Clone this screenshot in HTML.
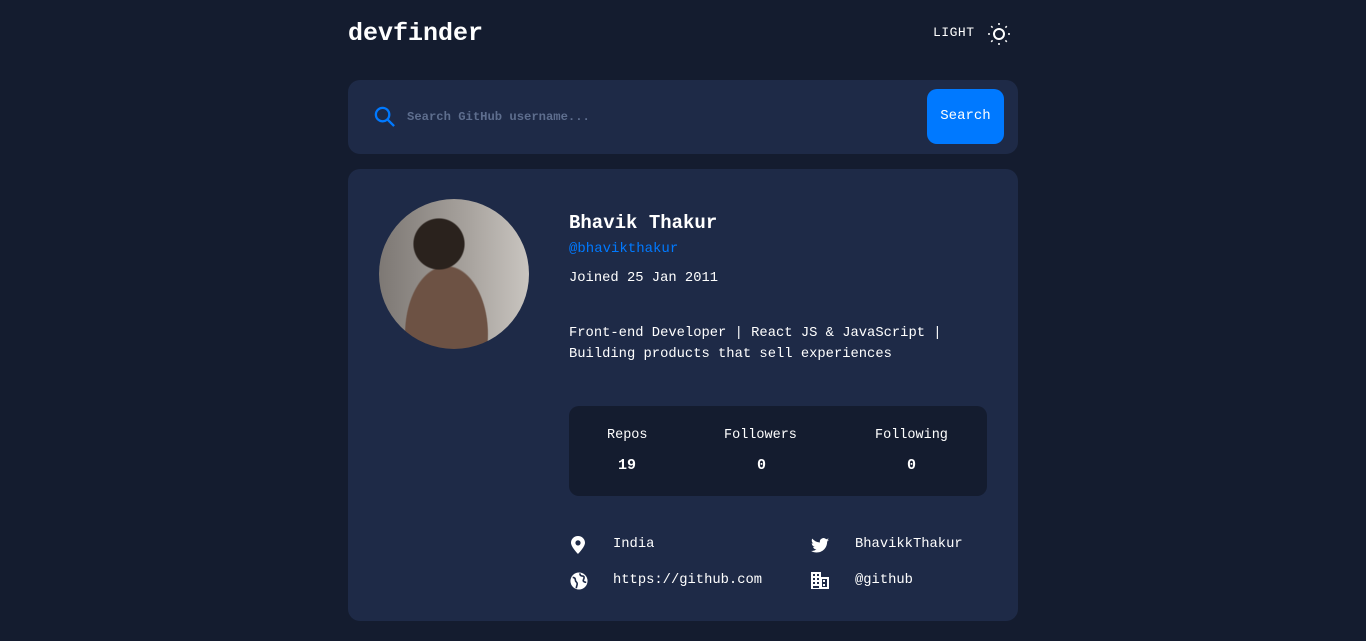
<!DOCTYPE html>
<html><head><style>
*{margin:0;padding:0;box-sizing:border-box}
body{width:1366px;height:641px;background:#141c2f;font-family:"Liberation Mono",monospace;color:#fff;position:relative;overflow:hidden}
.abs{position:absolute;white-space:nowrap}
</style></head><body>
<div class="abs" style="left:348px;top:18px;font-size:25px;font-weight:bold;line-height:32px">devfinder</div>
<div class="abs" style="left:933px;top:25px;font-size:13px;letter-spacing:0.5px;line-height:16px">LIGHT</div>
<svg class="abs" style="left:987px;top:22px" width="24" height="24" viewBox="0 0 24 24" fill="none" stroke="#fff" stroke-width="2"><circle cx="12" cy="12" r="5"/><path d="M12 1v2M12 21v2M1 12h2M21 12h2M4.2 4.2l1.4 1.4M18.4 18.4l1.4 1.4M4.2 19.8l1.4-1.4M18.4 5.6l1.4-1.4" stroke-width="1.5"/></svg>

<div class="abs" style="left:348px;top:80px;width:670px;height:74px;background:#1e2a47;border-radius:12px"></div>
<svg class="abs" style="left:373px;top:105px" width="23" height="23" viewBox="0 0 24 24" fill="none" stroke="#0079ff" stroke-width="2.4"><circle cx="10" cy="10" r="7"/><path d="M15 15l7 7"/></svg>
<div class="abs" style="left:407px;top:109px;font-size:12.2px;font-weight:bold;color:#5e6e8e;line-height:16px">Search GitHub username...</div>
<div class="abs" style="left:927px;top:89px;width:77px;height:55px;background:#0079ff;border-radius:10px;font-size:14px;line-height:55px;text-align:center">Search</div>

<div class="abs" style="left:348px;top:169px;width:670px;height:452px;background:#1e2a47;border-radius:12px"></div>
<div class="abs" style="left:379px;top:199px;width:150px;height:150px;border-radius:50%;background:radial-gradient(circle at 40% 30%,#2a221d 0 18%,transparent 19%),radial-gradient(ellipse at 45% 90%,#6d5244 0 35%,transparent 36%),linear-gradient(90deg,#7d7874,#a8a39e 60%,#c9c5c0)"></div>
<div class="abs" style="left:569px;top:211px;font-size:19px;font-weight:bold;line-height:24px">Bhavik Thakur</div>
<div class="abs" style="left:569px;top:240px;font-size:14px;color:#0079ff;line-height:18px">@bhavikthakur</div>
<div class="abs" style="left:569px;top:270px;font-size:13.8px;line-height:18px">Joined 25 Jan 2011</div>
<div class="abs" style="left:569px;top:323px;font-size:13.8px;line-height:21px">Front-end Developer | React JS &amp; JavaScript |<br>Building products that sell experiences</div>

<div class="abs" style="left:569px;top:406px;width:418px;height:90px;background:#141c2f;border-radius:10px"></div>
<div class="abs" style="left:607px;top:427px;font-size:13.5px;line-height:18px">Repos</div>
<div class="abs" style="left:618px;top:457px;font-size:15px;font-weight:bold;line-height:18px">19</div>
<div class="abs" style="left:724px;top:427px;font-size:13.5px;line-height:18px">Followers</div>
<div class="abs" style="left:757px;top:457px;font-size:15px;font-weight:bold;line-height:18px">0</div>
<div class="abs" style="left:875px;top:427px;font-size:13.5px;line-height:18px">Following</div>
<div class="abs" style="left:907px;top:457px;font-size:15px;font-weight:bold;line-height:18px">0</div>

<svg class="abs" style="left:571px;top:536px" width="14" height="18" viewBox="0 0 14 18"><path d="M7 0C3.1 0 0 3 0 6.8 0 11 7 18 7 18s7-7 7-11.2C14 3 10.9 0 7 0zm0 9.5A2.6 2.6 0 1 1 7 4.3a2.6 2.6 0 0 1 0 5.2z" fill="#fff"/></svg>
<div class="abs" style="left:613px;top:536px;font-size:13.8px;line-height:18px">India</div>
<svg class="abs" style="left:570px;top:572px" width="18" height="18" viewBox="0 0 20 20"><circle cx="10" cy="10" r="9.5" fill="#fff"/><path d="M3 6c2 0 3 1 3 3s2 2 2 4-1 3-1 5M11 1.5c0 2 1 3 3 3s2 2 1 4 1 3 3 3" stroke="#1e2a47" stroke-width="1.8" fill="none"/></svg>
<div class="abs" style="left:613px;top:572px;font-size:13.8px;line-height:18px">https://github.com</div>
<svg class="abs" style="left:811px;top:538px" width="18" height="15" viewBox="0 0 24 20"><path d="M24 2.4c-.9.4-1.8.7-2.8.8 1-.6 1.800-1.6 2.2-2.7-1 .6-2 1-3.1 1.2A4.9 4.9 0 0 0 11.9 6 14 14 0 0 1 1.7.9a4.9 4.9 0 0 0 1.5 6.6c-.8 0-1.6-.3-2.2-.6 0 2.4 1.7 4.4 3.9 4.8-.7.2-1.5.2-2.2.1a4.9 4.9 0 0 0 4.6 3.4A9.900 9.900 0 0 1 0 17.2 14 14 0 0 0 7.5 19.4c9.1 0 14-7.5 14-14v-.6c1-.7 1.8-1.6 2.5-2.4z" fill="#fff"/></svg>
<div class="abs" style="left:855px;top:536px;font-size:13.8px;line-height:18px">BhavikkThakur</div>
<svg class="abs" style="left:811px;top:572px" width="18" height="17" viewBox="0 0 18 17"><path d="M0 0h10v5h8v12H0z" fill="#fff"/><g fill="#1e2a47"><rect x="2" y="2" width="2" height="2"/><rect x="6" y="2" width="2" height="2"/><rect x="2" y="6" width="2" height="2"/><rect x="6" y="6" width="2" height="2"/><rect x="2" y="10" width="2" height="2"/><rect x="6" y="10" width="2" height="2"/><rect x="11" y="7" width="5" height="8"/><rect x="2" y="14" width="6" height="2"/></g><g fill="#fff"><rect x="12" y="8" width="2" height="2"/><rect x="12" y="12" width="2" height="2"/></g></svg>
<div class="abs" style="left:855px;top:572px;font-size:13.8px;line-height:18px">@github</div>
</body></html>
